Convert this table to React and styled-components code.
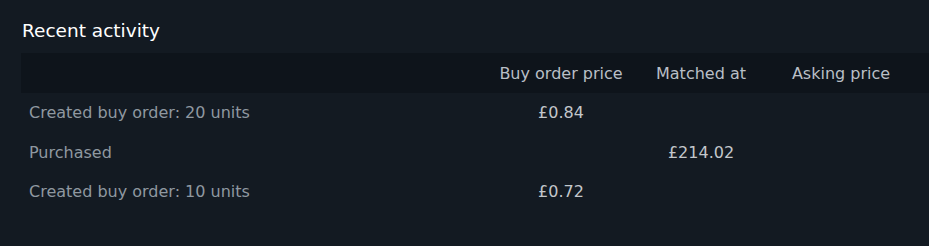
import styled, {createGlobalStyle} from "styled-components";

const GlobalStyle = createGlobalStyle`
  html, body {
    margin: 0;
    padding: 0;
    background-color: #131a22;
    overflow: hidden;
  }
  body {
    font-family: 'DejaVu Sans', Verdana, sans-serif;
  }
`

const Page = styled.div`
  width: 929px;
  height: 246px;
  padding: 20px 0 0 21px;
  box-sizing: border-box;
  overflow: hidden;
`

const Title = styled.h2`
  margin: 0 0 11px 1px;
  font-size: 18.5px;
  font-weight: normal;
  color: #ffffff;
  line-height: 22px;
`

const Table = styled.div`
  width: 1000px;
`

const Row = styled.div`
  display: grid;
  grid-template-columns: 470px 140px 140px 140px 1fr;
  height: ${({$head}) => $head ? '40px' : '39.5px'};
  align-items: center;
  background-color: ${({$head}) => $head ? '#0e141b' : 'transparent'};
`

const Cell = styled.div`
  font-size: 16px;
  text-align: ${({$left}) => $left ? 'left' : 'center'};
  padding-left: ${({$left}) => $left ? '8px' : '0'};
  color: ${({$head, $left}) => $head ? '#b9bfc6' : $left ? '#8f98a0' : '#c3c7cb'};
`

const activity = [
    {desc: 'Created buy order: 20 units', buy: '£0.84'},
    {desc: 'Purchased', matched: '£214.02'},
    {desc: 'Created buy order: 10 units', buy: '£0.72'},
]

const App = () => {
    return (
        <Page>
            <GlobalStyle/>
            <Title>Recent activity</Title>
            <Table>
                <Row $head>
                    <Cell $left $head></Cell>
                    <Cell $head>Buy order price</Cell>
                    <Cell $head>Matched at</Cell>
                    <Cell $head>Asking price</Cell>
                    <Cell $head></Cell>
                </Row>
                {activity.map((a, i) => (
                    <Row key={i}>
                        <Cell $left>{a.desc}</Cell>
                        <Cell>{a.buy}</Cell>
                        <Cell>{a.matched}</Cell>
                        <Cell>{a.asking}</Cell>
                        <Cell></Cell>
                    </Row>
                ))}
            </Table>
        </Page>
    )
}

export default App
